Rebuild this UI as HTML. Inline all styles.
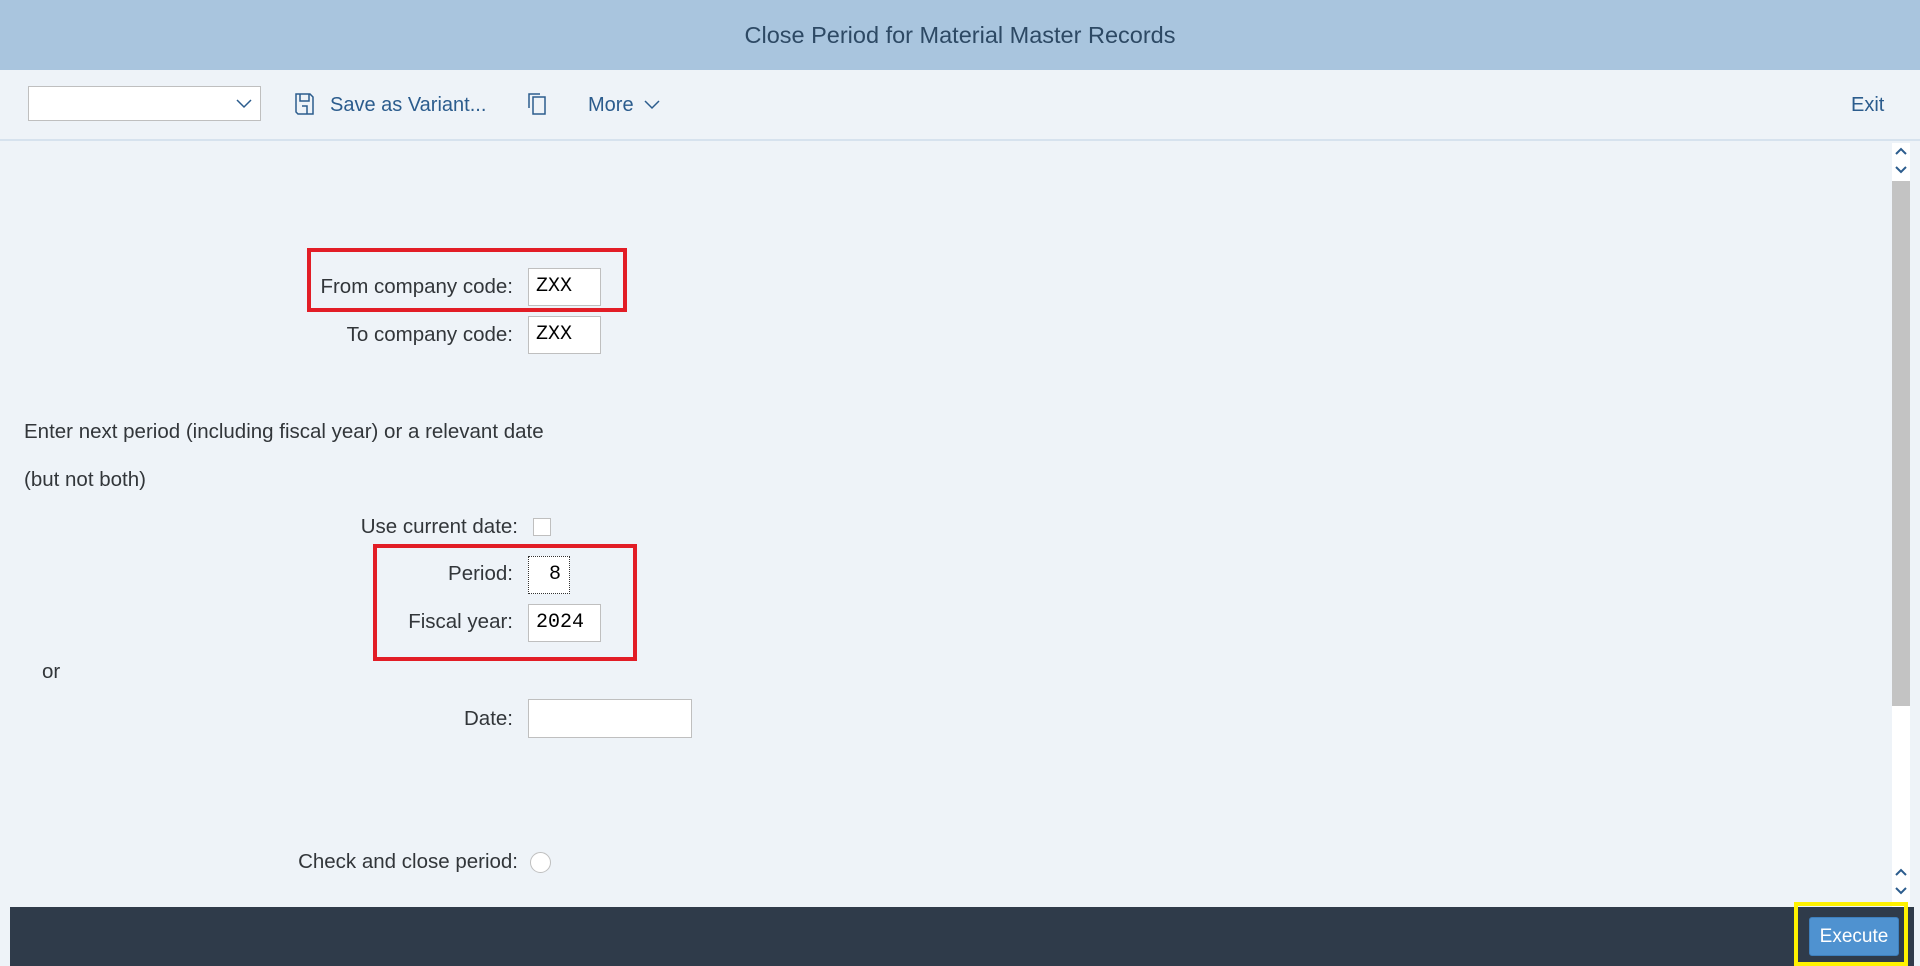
<!DOCTYPE html>
<html><head><meta charset="utf-8"><style>
*{box-sizing:border-box;margin:0;padding:0}
body{width:1920px;height:966px;background:#eef3f8;position:relative;overflow:hidden;font-family:"Liberation Sans",sans-serif;color:#32363a}
.a{position:absolute}
.hdr{left:0;top:0;width:1920px;height:70px;background:#a9c5de;text-align:center;line-height:70px;font-size:23.5px;color:#2d4964}
.tb{left:0;top:70px;width:1920px;height:71px;border-bottom:2px solid #d6e2ee}
.tbt{font-size:20px;color:#2b5c8d;top:94px}
.lbl{font-size:20.5px;color:#32363a;text-align:right;width:500px;left:13px;line-height:22px}
.inp{background:#fff;border:1px solid #bfbfbf;font-family:"Liberation Mono",monospace;font-size:20px;line-height:36px;padding-left:7px;color:#000}
.red{border:4px solid #e21d26}
</style></head><body>
<div class="a hdr">Close Period for Material Master Records</div>
<div class="a tb"></div>
<div class="a" style="left:28px;top:86px;width:233px;height:35px;background:#fff;border:1px solid #bfbfbf"></div>
<svg class="a" style="left:236px;top:97px" width="16" height="12" viewBox="0 0 16 12"><path d="M1 3l7 7 7-7" fill="none" stroke="#2b5c8d" stroke-width="1.5"/></svg>
<svg class="a" style="left:294px;top:93px" width="20" height="22" viewBox="0 0 20 22"><path d="M2 1h14l3 3v17H4l-2-2z M6 1v7h9V1 M8 13h5v8" fill="none" stroke="#2b5c8d" stroke-width="1.5"/></svg>
<div class="a tbt" style="left:330px">Save as Variant...</div>
<svg class="a" style="left:527px;top:92px" width="22" height="24" viewBox="0 0 22 24"><path d="M2 16V2h11 M6 5h12v17H6z" fill="none" stroke="#2b5c8d" stroke-width="1.5"/></svg>
<div class="a tbt" style="left:588px">More</div>
<svg class="a" style="left:644px;top:99px" width="16" height="12" viewBox="0 0 16 12"><path d="M1 2l7 7 7-7" fill="none" stroke="#2b5c8d" stroke-width="1.5"/></svg>
<div class="a tbt" style="left:1851px">Exit</div>

<div class="a" style="left:1892px;top:143px;width:18px;height:764px;background:#fff"></div>
<div class="a" style="left:1892px;top:181px;width:18px;height:525px;background:#c3c3c3"></div>
<svg class="a" style="left:1893px;top:146px" width="16" height="30" viewBox="0 0 16 30"><path d="M3 8l5-5 5 5 M3 21l5 5 5-5" fill="none" stroke="#2b5c8d" stroke-width="2"/></svg>
<svg class="a" style="left:1893px;top:867px" width="16" height="30" viewBox="0 0 16 30"><path d="M3 8l5-5 5 5 M3 21l5 5 5-5" fill="none" stroke="#2b5c8d" stroke-width="2"/></svg>

<div class="a lbl" style="top:276px">From company code:</div>
<div class="a inp" style="left:528px;top:268px;width:73px;height:38px">ZXX</div>
<div class="a red" style="left:307px;top:248px;width:320px;height:64px"></div>
<div class="a lbl" style="top:324px">To company code:</div>
<div class="a inp" style="left:528px;top:316px;width:73px;height:38px">ZXX</div>

<div class="a" style="left:24px;top:420px;font-size:20.5px">Enter next period (including fiscal year) or a relevant date</div>
<div class="a" style="left:24px;top:468px;font-size:20.5px">(but not both)</div>
<div class="a lbl" style="top:516px;left:18px">Use current date:</div>
<div class="a" style="left:533px;top:518px;width:18px;height:18px;background:#fff;border:1px solid #bfbfbf"></div>
<div class="a lbl" style="top:563px">Period:</div>
<div class="a inp" style="left:528px;top:556px;width:42px;height:38px;text-align:right;padding-right:8px;border:1px dotted #333">8</div>
<div class="a lbl" style="top:611px">Fiscal year:</div>
<div class="a inp" style="left:528px;top:604px;width:73px;height:38px">2024</div>
<div class="a red" style="left:373px;top:544px;width:264px;height:117px"></div>
<div class="a" style="left:42px;top:660px;font-size:20.5px">or</div>
<div class="a lbl" style="top:708px">Date:</div>
<div class="a inp" style="left:528px;top:699px;width:164px;height:39px"></div>
<div class="a lbl" style="top:851px;left:18px">Check and close period:</div>
<div class="a" style="left:530px;top:852px;width:21px;height:21px;border-radius:50%;background:#fff;border:1px solid #bfbfbf"></div>

<div class="a" style="left:10px;top:907px;width:1904px;height:59px;background:#2f3b4a"></div>
<div class="a" style="left:1809px;top:917px;width:90px;height:39px;background:#4f92d0;border:1px solid #3d7fbd;border-radius:3px;color:#fff;font-size:19px;text-align:center;line-height:37px">Execute</div>
<div class="a" style="left:1794px;top:902px;width:114px;height:64px;border:4px solid #fff200"></div>
</body></html>
